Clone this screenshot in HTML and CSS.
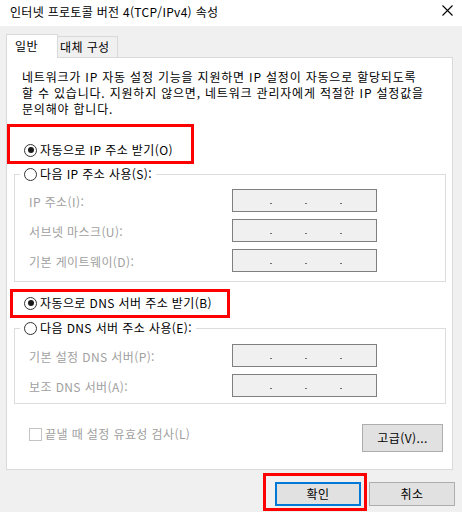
FILE: index.html
```html
<!DOCTYPE html>
<html lang="ko">
<head>
<meta charset="utf-8">
<title>인터넷 프로토콜 버전 4(TCP/IPv4) 속성</title>
<link rel="stylesheet" href="styles.css">
</head>
<body>
<div class="dialog">
  <div class="titlebar">
    <span class="title">인터넷 프로토콜 버전 4(TCP/IPv4) 속성</span>
    <svg class="close" width="11" height="11" viewBox="0 0 11 11"><path d="M0.5 0.5L10.5 10.5M10.5 0.5L0.5 10.5" stroke="#000" stroke-width="1.1" fill="none"/></svg>
  </div>
  <div class="tabs">
    <div class="tab active">일반</div>
    <div class="tab">대체 구성</div>
  </div>
  <div class="panel">
    <p class="desc">네트워크가 IP 자동 설정 기능을 지원하면 IP 설정이 자동으로 할당되도록<br>할 수 있습니다. 지원하지 않으면, 네트워크 관리자에게 적절한 IP 설정값을<br>문의해야 합니다.</p>
    <div class="radio-row first"><span class="radio checked"></span>자동으로 IP 주소 받기(O)</div>
    <div class="group group-ip">
      <div class="legend"><span class="radio"></span>다음 IP 주소 사용(S):</div>
      <div class="fields">
        <span class="flabel">IP 주소(I):</span><span class="ipbox"><i></i><i></i><i></i></span>
        <span class="flabel">서브넷 마스크(U):</span><span class="ipbox"><i></i><i></i><i></i></span>
        <span class="flabel">기본 게이트웨이(D):</span><span class="ipbox"><i></i><i></i><i></i></span>
      </div>
    </div>
    <div class="radio-row second"><span class="radio checked"></span>자동으로 DNS 서버 주소 받기(B)</div>
    <div class="group group-dns">
      <div class="legend"><span class="radio"></span>다음 DNS 서버 주소 사용(E):</div>
      <div class="fields">
        <span class="flabel">기본 설정 DNS 서버(P):</span><span class="ipbox"><i></i><i></i><i></i></span>
        <span class="flabel">보조 DNS 서버(A):</span><span class="ipbox"><i></i><i></i><i></i></span>
      </div>
    </div>
    <div class="bottom-row">
      <div class="check-row"><span class="checkbox"></span>끝낼 때 설정 유효성 검사(L)</div>
      <div class="btn adv">고급(V)...</div>
    </div>
  </div>
  <div class="buttons">
    <div class="btn ok">확인</div>
    <div class="btn">취소</div>
  </div>
  <div class="mark mark-ip"></div>
  <div class="mark mark-dns"></div>
  <div class="mark mark-ok"></div>
</div>
</body>
</html>
```

FILE: styles.css
```css
html, body {
  margin: 0;
  padding: 0;
}
body {
  width: 462px;
  height: 512px;
  overflow: hidden;
  background: #f0f0f0;
  font-family: "Noto Sans CJK KR", "Noto Sans", sans-serif;
  font-size: 12px;
  color: #000;
  letter-spacing: 0.4px;
}
.dialog {
  position: relative;
  width: 462px;
  height: 512px;
}
.titlebar {
  height: 26px;
  background: #fff;
  display: flex;
  justify-content: space-between;
  align-items: flex-start;
  padding-left: 10px;
  padding-right: 9px;
  box-sizing: border-box;
}
.title {
  line-height: 16px;
  margin-top: 4px;
  letter-spacing: 0.3px;
}
.close {
  margin-top: 5px;
}
.tabs {
  display: flex;
  align-items: flex-end;
  margin: 8px 0 -1px 6px;
  position: relative;
  z-index: 1;
}
.tab {
  box-sizing: border-box;
  border: 1px solid #d9d9d9;
  border-bottom: none;
  background: #f0f0f0;
  height: 21px;
  width: 60px;
  margin-bottom: 1px;
  padding-left: 2px;
  line-height: 19px;
  border-left: none;
  white-space: nowrap;
}
.tab.active {
  background: #fff;
  height: 24px;
  width: 52px;
  margin-bottom: 0;
  padding-left: 8px;
  line-height: 21px;
  border-left: 1px solid #d9d9d9;
}
.panel {
  box-sizing: border-box;
  margin-left: 6px;
  width: 447px;
  height: 413px;
  background: #fff;
  border: 1px solid #d9d9d9;
  display: flex;
  flex-direction: column;
}
.desc {
  margin: 0;
  padding: 11px 0 0 15px;
  line-height: 16px;
  white-space: nowrap;
  letter-spacing: 0.8px;
}
.radio-row, .legend {
  display: flex;
  align-items: center;
  height: 16px;
  line-height: 16px;
  white-space: nowrap;
}
.radio-row {
  padding-left: 17px;
}
.radio-row.first {
  margin-top: 25px;
}
.radio-row.second {
  margin-top: 13px;
  padding-left: 17px;
}
.radio {
  box-sizing: border-box;
  width: 13px;
  height: 13px;
  border: 1px solid #333;
  border-radius: 50%;
  margin-right: 3px;
  display: flex;
  align-items: center;
  justify-content: center;
  flex: none;
  background: #fff;
}
.radio.checked::after {
  content: "";
  width: 6px;
  height: 6px;
  border-radius: 50%;
  background: #1a1a1a;
}
.group {
  box-sizing: border-box;
  margin-left: 7px;
  width: 432px;
  border: 1px solid #dcdcdc;
  display: flex;
  flex-direction: column;
  align-items: flex-start;
}
.group-ip {
  margin-top: 16px;
  padding-bottom: 9px;
}
.group-dns {
  margin-top: 17px;
  padding-bottom: 6px;
}
.legend {
  margin-top: -9px;
  margin-left: 5px;
  padding: 0 4px;
  background: #fff;
}
.fields {
  display: grid;
  grid-template-columns: 203px 145px;
  grid-auto-rows: 23px;
  row-gap: 7px;
  padding-left: 14px;
  align-items: center;
}
.group-ip .fields {
  margin-top: 7px;
}
.group-dns .fields {
  margin-top: 8px;
}
.flabel {
  color: #a0a0a0;
  line-height: 16px;
  white-space: nowrap;
  padding-top: 2px;
}
.ipbox {
  box-sizing: border-box;
  height: 23px;
  border: 1px solid #7f7f7f;
  background: #f0f0f0;
  display: flex;
  align-items: flex-start;
  padding: 13px 0 0 37px;
  gap: 33px;
}
.ipbox i {
  display: block;
  width: 2px;
  height: 1px;
  background: #6e6e7a;
}
.bottom-row {
  display: flex;
  justify-content: space-between;
  align-items: flex-start;
  margin-top: 20px;
  padding-left: 22px;
  padding-right: 9px;
}
.check-row {
  display: flex;
  align-items: center;
  color: #a0a0a0;
  line-height: 16px;
  height: 16px;
  margin-top: 2px;
  white-space: nowrap;
}
.checkbox {
  box-sizing: border-box;
  width: 13px;
  height: 13px;
  border: 1px solid #c4c4c4;
  background: #fff;
  margin-right: 3px;
}
.btn {
  box-sizing: border-box;
  background: #e1e1e1;
  border: 1px solid #adadad;
  display: flex;
  align-items: center;
  justify-content: center;
  width: 86px;
  height: 24px;
  line-height: 16px;
}
.btn.adv {
  width: 81px;
  height: 28px;
}
.buttons {
  display: flex;
  justify-content: flex-end;
  gap: 8px;
  margin-top: 12px;
  padding-right: 7px;
}
.btn.ok {
  border: 2px solid #0078d7;
}
.mark {
  position: absolute;
  box-sizing: border-box;
  border: 3px solid #f00;
}
.mark-ip {
  left: 7px;
  top: 124px;
  width: 187px;
  height: 40px;
}
.mark-dns {
  left: 10px;
  top: 289px;
  width: 220px;
  height: 29px;
}
.mark-ok {
  left: 263px;
  top: 473px;
  width: 104px;
  height: 38px;
}
```
